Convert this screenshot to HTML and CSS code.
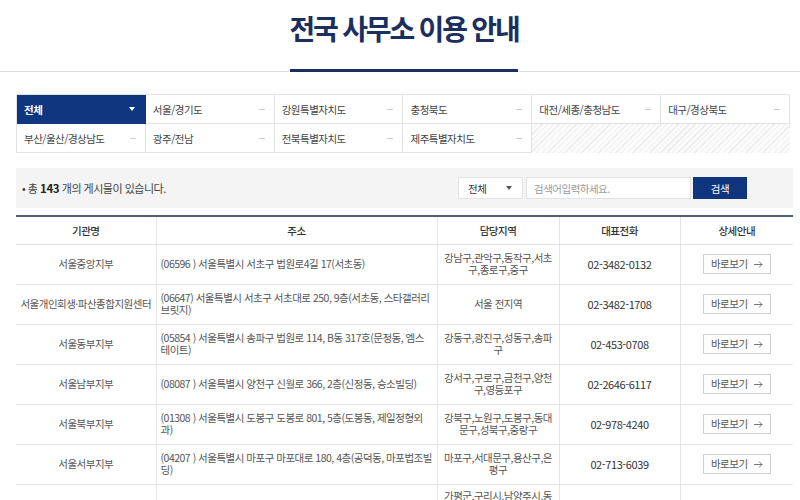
FILE: index.html
```html
<!DOCTYPE html>
<html lang="ko">
<head>
<meta charset="utf-8">
<title>전국 사무소 이용 안내</title>
<link rel="stylesheet" href="styles.css">
</head>
<body>
<header class="head">
  <h1 class="title">전국 사무소 이용 안내</h1>
</header>

<nav class="tabs">
  <a class="tab active">전체<span class="tri"></span></a>
  <a class="tab">서울/경기도<span class="dash"></span></a>
  <a class="tab">강원특별자치도<span class="dash"></span></a>
  <a class="tab">충청북도<span class="dash"></span></a>
  <a class="tab">대전/세종/충청남도<span class="dash"></span></a>
  <a class="tab">대구/경상북도<span class="dash"></span></a>
  <a class="tab">부산/울산/경상남도<span class="dash"></span></a>
  <a class="tab">광주/전남<span class="dash"></span></a>
  <a class="tab">전북특별자치도<span class="dash"></span></a>
  <a class="tab">제주특별자치도<span class="dash"></span></a>
  <div class="tab-empty"></div>
</nav>

<section class="searchbar">
  <p class="count">• 총 <b>143</b> 개의 게시물이 있습니다.</p>
  <form class="search">
    <div class="select">전체<span class="tri dark"></span></div>
    <div class="input">검색어입력하세요.</div>
    <div class="btn">검색</div>
  </form>
</section>

<table class="list">
  <colgroup>
    <col class="c1"><col class="c2"><col class="c3"><col class="c4"><col class="c5">
  </colgroup>
  <thead>
    <tr><th>기관명</th><th>주소</th><th>담당지역</th><th>대표전화</th><th>상세안내</th></tr>
  </thead>
  <tbody>
    <tr>
      <td class="name">서울중앙지부</td>
      <td class="addr">(06596 ) 서울특별시 서초구 법원로4길 17(서초동)</td>
      <td class="area">강남구,관악구,동작구,서초구,종로구,중구</td>
      <td class="tel">02-3482-0132</td>
      <td class="more"><a class="view">바로보기<svg width="9" height="7" viewBox="0 0 9 7"><path d="M0 3.5h8M5 0.5l3 3-3 3" fill="none" stroke="#666" stroke-width="0.9"/></svg></a></td>
    </tr>
    <tr>
      <td class="name">서울개인회생·파산종합지원센터</td>
      <td class="addr">(06647) 서울특별시 서초구 서초대로 250, 9층(서초동, 스타갤러리 브릿지)</td>
      <td class="area">서울 전지역</td>
      <td class="tel">02-3482-1708</td>
      <td class="more"><a class="view">바로보기<svg width="9" height="7" viewBox="0 0 9 7"><path d="M0 3.5h8M5 0.5l3 3-3 3" fill="none" stroke="#666" stroke-width="0.9"/></svg></a></td>
    </tr>
    <tr>
      <td class="name">서울동부지부</td>
      <td class="addr">(05854 ) 서울특별시 송파구 법원로 114, B동 317호(문정동, 엠스테이트)</td>
      <td class="area">강동구,광진구,성동구,송파구</td>
      <td class="tel">02-453-0708</td>
      <td class="more"><a class="view">바로보기<svg width="9" height="7" viewBox="0 0 9 7"><path d="M0 3.5h8M5 0.5l3 3-3 3" fill="none" stroke="#666" stroke-width="0.9"/></svg></a></td>
    </tr>
    <tr>
      <td class="name">서울남부지부</td>
      <td class="addr">(08087 ) 서울특별시 양천구 신월로 366, 2층(신정동, 승소빌딩)</td>
      <td class="area">강서구,구로구,금천구,양천구,영등포구</td>
      <td class="tel">02-2646-6117</td>
      <td class="more"><a class="view">바로보기<svg width="9" height="7" viewBox="0 0 9 7"><path d="M0 3.5h8M5 0.5l3 3-3 3" fill="none" stroke="#666" stroke-width="0.9"/></svg></a></td>
    </tr>
    <tr>
      <td class="name">서울북부지부</td>
      <td class="addr">(01308 ) 서울특별시 도봉구 도봉로 801, 5층(도봉동, 제일정형외과)</td>
      <td class="area">강북구,노원구,도봉구,동대문구,성북구,중랑구</td>
      <td class="tel">02-978-4240</td>
      <td class="more"><a class="view">바로보기<svg width="9" height="7" viewBox="0 0 9 7"><path d="M0 3.5h8M5 0.5l3 3-3 3" fill="none" stroke="#666" stroke-width="0.9"/></svg></a></td>
    </tr>
    <tr>
      <td class="name">서울서부지부</td>
      <td class="addr">(04207 ) 서울특별시 마포구 마포대로 180, 4층(공덕동, 마포법조빌딩)</td>
      <td class="area">마포구,서대문구,용산구,은평구</td>
      <td class="tel">02-713-6039</td>
      <td class="more"><a class="view">바로보기<svg width="9" height="7" viewBox="0 0 9 7"><path d="M0 3.5h8M5 0.5l3 3-3 3" fill="none" stroke="#666" stroke-width="0.9"/></svg></a></td>
    </tr>
    <tr>
      <td class="name">의정부지부</td>
      <td class="addr">(11616 ) 경기도 의정부시 녹양로34번길 23, 2층(가능동)</td>
      <td class="area tall">가평군,구리시,남양주시,동두천시,양주시,연천군,의정부시,철원군,포천시</td>
      <td class="tel">031-876-3711</td>
      <td class="more"><a class="view">바로보기<svg width="9" height="7" viewBox="0 0 9 7"><path d="M0 3.5h8M5 0.5l3 3-3 3" fill="none" stroke="#666" stroke-width="0.9"/></svg></a></td>
    </tr>
  </tbody>
</table>
</body>
</html>
```

FILE: styles.css
```css
* { box-sizing: border-box; }

body {
  margin: 0;
  font-family: "Noto Sans CJK KR", "Noto Sans", sans-serif;
  font-size: 10.5px;
  letter-spacing: -0.5px;
  color: #555;
  background: #fff;
}

/* ---------- title ---------- */
.head {
  text-align: center;
  padding-left: 8px;
  border-bottom: 1px solid #dedede;
}
.title {
  display: inline-block;
  margin: 0 0 -1px;
  padding: 8px 0 21px;
  line-height: 40px;
  font-size: 28px;
  font-weight: 700;
  letter-spacing: -2.2px;
  color: #1b2f5e;
  border-bottom: 3px solid #1b2f5e;
}

/* ---------- region tabs ---------- */
.tabs {
  display: grid;
  grid-template-columns: repeat(6, 1fr);
  width: 774px;
  margin: 22px 0 0 16px;
  border-top: 1px solid #e3e3e3;
  border-left: 1px solid #e3e3e3;
}
.tab {
  height: 29px;
  display: flex;
  align-items: center;
  justify-content: space-between;
  padding: 0 9px 0 7px;
  border-right: 1px solid #e3e3e3;
  border-bottom: 1px solid #e3e3e3;
  color: #444;
  background: #fff;
}
.tab.active {
  background: #10367f;
  color: #fff;
  font-weight: 700;
  border-color: #10367f;
}
.dash {
  width: 6px;
  height: 1px;
  background: #cfcfcf;
}
.tri {
  width: 0;
  height: 0;
  border-left: 3.5px solid transparent;
  border-right: 3.5px solid transparent;
  border-top: 4px solid #fff;
  margin-right: 1px;
}
.tri.dark { border-top-color: #555; }
.tab-empty {
  grid-column: span 2;
  background: repeating-linear-gradient(135deg, #fbfbfb 0 3px, #ececec 3px 4px);
}

/* ---------- search bar ---------- */
.searchbar {
  width: 777px;
  height: 40px;
  margin: 15px 0 0 16px;
  padding: 0 46px 0 6px;
  background: #f4f4f5;
  display: flex;
  align-items: center;
  justify-content: space-between;
}
.count { margin: 0; color: #444; font-size: 11px; }
.count b { color: #222; font-size: 11.5px; letter-spacing: -0.4px; }
.search { display: flex; align-items: center; }
.select {
  width: 65px;
  height: 22px;
  padding: 0 9px 0 9px;
  display: flex;
  align-items: center;
  justify-content: space-between;
  background: #fff;
  border: 1px solid #e2e2e2;
  color: #333;
}
.input {
  width: 165px;
  height: 22px;
  margin-left: 3px;
  padding: 0 7px;
  display: flex;
  align-items: center;
  background: #fff;
  border: 1px solid #e2e2e2;
  color: #9a9a9a;
}
.btn {
  width: 54px;
  height: 22px;
  margin-left: 2px;
  display: flex;
  align-items: center;
  justify-content: center;
  background: #0f357e;
  color: #fff;
}

/* ---------- table ---------- */
.list {
  width: 777px;
  margin: 7px 0 0 16px;
  border-collapse: collapse;
  table-layout: fixed;
  border-top: 2px solid #505f72;
}
.c1 { width: 140px; }
.c2 { width: 281px; }
.c3 { width: 122px; }
.c4 { width: 121px; }
.c5 { width: 113px; }
.list th {
  height: 28px;
  font-weight: 500;
  color: #333;
  border-bottom: 1px solid #e1e1e1;
  border-left: 1px solid #e6e6e6;
}
.list td {
  height: 40px;
  line-height: 12.5px;
  text-align: center;
  border-bottom: 1px solid #e6e6e6;
  border-left: 1px solid #e6e6e6;
  padding: 0 4px;
}
.list th:first-child, .list td:first-child { border-left: 0; }
.list td.addr { text-align: left; }
.list td.area { padding: 0 5px; }
.list td.area.tall { padding: 5px 5px 16px; vertical-align: top; }
.list td.tel { color: #333; font-size: 11px; letter-spacing: -0.4px; }
.view {
  display: inline-flex;
  align-items: center;
  justify-content: center;
  gap: 6px;
  width: 68px;
  height: 20px;
  border: 1px solid #cdcdcd;
  color: #555;
  background: #fff;
}
```
